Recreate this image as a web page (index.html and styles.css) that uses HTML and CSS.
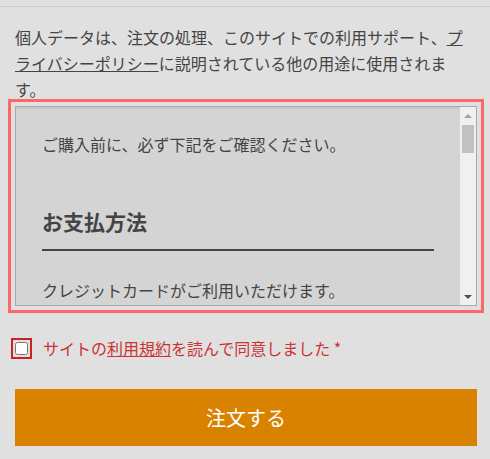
FILE: index.html
```html
<!DOCTYPE html>
<html lang="ja">
<head>
<meta charset="utf-8">
<title>注文</title>
<link rel="stylesheet" href="styles.css">
</head>
<body>
<div class="checkout">
  <p class="privacy">個人データは、注文の処理、このサイトでの利用サポート、<a href="#" class="link">プライバシーポリシー</a>に説明されている他の用途に使用されます。</p>
  <div class="terms">
    <div class="terms-scroll">
      <div class="terms-inner">
        <p class="lead">ご購入前に、必ず下記をご確認ください。</p>
        <h2 class="terms-title">お支払方法</h2>
        <p>クレジットカードがご利用いただけます。</p>
        <p>銀行振込の場合は、ご注文後7日以内にお振込みください。</p>
        <p>振込手数料はお客様のご負担となります。</p>
        <h2 class="terms-title">配送について</h2>
        <p>ご入金確認後、3営業日以内に発送いたします。</p>
        <p>送料は全国一律となります。</p>
        <h2 class="terms-title">返品・交換について</h2>
        <p>商品到着後7日以内にご連絡ください。</p>
        <p>お客様都合による返品はお受けできません。</p>
        <h2 class="terms-title">お問い合わせ</h2>
        <p>ご不明な点はお問い合わせフォームよりご連絡ください。</p>
      </div>
    </div>
    <div class="scrollbar" aria-hidden="true">
      <div class="sb-btn"><span class="arrow-up"></span></div>
      <div class="sb-track"><div class="sb-thumb"></div></div>
      <div class="sb-btn"><span class="arrow-down"></span></div>
    </div>
  </div>
  <label class="agree">
    <input type="checkbox" class="agree-box">
    <span class="agree-text">サイトの<a href="#" class="agree-link">利用規約</a>を読んで同意しました <span class="req">*</span></span>
  </label>
  <button class="order-btn" type="button">注文する</button>
</div>
</body>
</html>
```
FILE: styles.css
```css
html, body {
  margin: 0;
  padding: 0;
  background: #e0e0e0;
}
body {
  font-family: "Noto Sans CJK JP", "Noto Sans", sans-serif;
  color: #444;
  font-size: 16px;
}
.checkout {
  margin-top: 6px;
  border-top: 1px solid #c9c9c9;
  padding: 17px 13px 0 15px;
}
.privacy {
  margin: 0 8px 0 0;
  line-height: 26px;
}
.link {
  color: #444;
  text-decoration: underline;
}
.terms {
  margin-top: 4px;
  height: 200px;
  box-sizing: border-box;
  border: 1px solid #a9a9a9;
  background: #d4d4d4;
  outline: 3px solid #ff6666;
  outline-offset: 4px;
  display: flex;
  box-shadow: inset 0 2px 2px rgba(0,0,0,0.06);
}
.terms-scroll {
  flex: 1;
  min-width: 0;
  overflow-y: auto;
  scrollbar-width: none;
}
.terms-inner {
  padding: 24px 26px 30px 26px;
}
.terms-inner p {
  margin: 0 0 26px;
  line-height: 26px;
}
.terms-inner .lead {
  margin-bottom: 49px;
}
.terms-title {
  margin: 0 0 26px;
  font-size: 21px;
  font-weight: bold;
  line-height: 31px;
  padding-bottom: 12px;
  border-bottom: 2px solid #444;
  color: #444;
}
.scrollbar {
  width: 16px;
  flex: none;
  background: #f0f0f0;
  display: flex;
  flex-direction: column;
}
.sb-btn {
  height: 17px;
  flex: none;
  display: flex;
  align-items: center;
  justify-content: center;
}
.arrow-up {
  width: 0;
  height: 0;
  border-left: 4px solid transparent;
  border-right: 4px solid transparent;
  border-bottom: 4px solid #a3a3a3;
}
.arrow-down {
  width: 0;
  height: 0;
  border-left: 4px solid transparent;
  border-right: 4px solid transparent;
  border-top: 4px solid #505050;
}
.sb-track {
  flex: 1;
  padding: 1px 2px 0 2px;
}
.sb-thumb {
  height: 28px;
  background: #c1c1c1;
}
.agree {
  margin-top: 29px;
  display: flex;
  align-items: center;
  gap: 15px;
  line-height: 26px;
  color: #cc3333;
}
.agree-box {
  margin: 0;
  width: 13px;
  height: 13px;
  outline: 2px solid #cc2222;
  outline-offset: 2px;
}
.agree-link {
  color: #cc3333;
  text-decoration: underline;
}
.order-btn {
  display: block;
  margin-top: 28px;
  width: 100%;
  height: 57px;
  border: none;
  background: #d98200;
  color: #fff;
  font-family: "Noto Sans CJK JP", "Noto Sans", sans-serif;
  font-size: 20px;
  cursor: pointer;
}
```
